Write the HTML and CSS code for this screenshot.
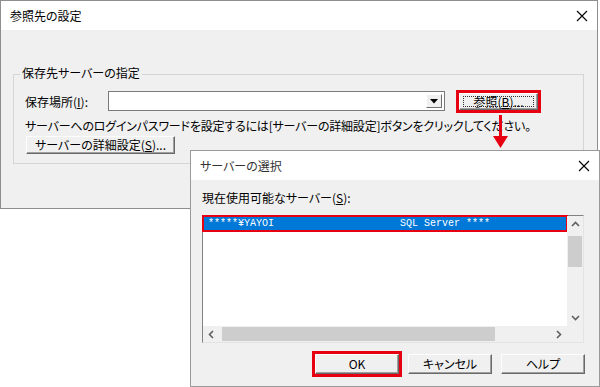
FILE: index.html
```html
<!DOCTYPE html>
<html lang="ja">

<head>
    <meta charset="UTF-8">
    <meta name="viewport" content="width=device-width, initial-scale=1.0">
    <title>参照先の設定</title>
    <link rel="stylesheet" href="styles.css">
</head>

<body>
    <div class="desktop">
        <div class="window main-window">
            <div class="titlebar">
                <span class="title">参照先の設定</span>
                <svg class="close" width="12" height="12" viewBox="0 0 12 12">
                    <path d="M1 1 L11 11 M11 1 L1 11" stroke="#000" stroke-width="1.1" fill="none" />
                </svg>
            </div>
            <div class="window-body">
                <fieldset class="group">
                    <legend>保存先サーバーの指定</legend>
                    <div class="row place-row">
                        <span class="label">保存場所(<u>I</u>):</span>
                        <div class="combo">
                            <div class="combo-btn">
                                <svg width="8" height="5" viewBox="0 0 8 5">
                                    <path d="M0 0 L8 0 L4 4.5 Z" fill="#000" />
                                </svg>
                            </div>
                        </div>
                        <button class="btn browse-btn marked"><span class="focus">参照(<u>B</u>)...</span></button>
                    </div>
                    <p class="hint">サーバーへのログインパスワードを設定するには[サーバーの詳細設定]ボタンをクリックしてください。</p>
                    <button class="btn detail-btn">サーバーの詳細設定(<u>S</u>)...</button>
                </fieldset>
            </div>
        </div>

        <svg class="pointer" width="17" height="34" viewBox="0 0 17 34">
            <path d="M8.5 0 L8.5 24" stroke="#e60012" stroke-width="3" fill="none" />
            <path d="M1 21 L16 21 L8.5 33 Z" fill="#e60012" />
        </svg>

        <div class="window server-window">
            <div class="titlebar">
                <span class="title sub-title">サーバーの選択</span>
                <svg class="close" width="12" height="12" viewBox="0 0 12 12">
                    <path d="M1 1 L11 11 M11 1 L1 11" stroke="#000" stroke-width="1.1" fill="none" />
                </svg>
            </div>
            <div class="window-body server-body">
                <p class="list-label">現在使用可能なサーバー(<u>S</u>):</p>
                <div class="listbox">
                    <div class="items">
                        <div class="item selected">*****¥YAYOI                     SQL Server ****</div>
                    </div>
                    <div class="vscroll">
                        <span class="arrow">
                            <svg width="9" height="6" viewBox="0 0 9 6"><path d="M1 5 L4.5 1.5 L8 5" stroke="#606060" stroke-width="1.6" fill="none" /></svg>
                        </span>
                        <div class="track"><div class="thumb vthumb"></div></div>
                        <span class="arrow">
                            <svg width="9" height="6" viewBox="0 0 9 6"><path d="M1 1 L4.5 4.5 L8 1" stroke="#606060" stroke-width="1.6" fill="none" /></svg>
                        </span>
                    </div>
                    <div class="hscroll">
                        <span class="arrow">
                            <svg width="6" height="9" viewBox="0 0 6 9"><path d="M5 1 L1.5 4.5 L5 8" stroke="#606060" stroke-width="1.6" fill="none" /></svg>
                        </span>
                        <div class="track"><div class="thumb hthumb"></div></div>
                        <span class="arrow">
                            <svg width="6" height="9" viewBox="0 0 6 9"><path d="M1 1 L4.5 4.5 L1 8" stroke="#606060" stroke-width="1.6" fill="none" /></svg>
                        </span>
                    </div>
                    <div class="corner"></div>
                </div>
                <div class="actions">
                    <button class="btn action-btn marked">OK</button>
                    <button class="btn action-btn">キャンセル</button>
                    <button class="btn action-btn">ヘルプ</button>
                </div>
            </div>
        </div>
    </div>
</body>

</html>
```

FILE: styles.css
```css
* {
    box-sizing: border-box;
}

body {
    margin: 0;
    background-color: #fff;
    font-family: "Noto Sans CJK JP", sans-serif;
    font-size: 12px;
    font-feature-settings: "palt";
    color: #000;
}

.desktop {
    position: relative;
    width: 600px;
    height: 387px;
    overflow: hidden;
}

.window {
    display: flex;
    flex-direction: column;
    background-color: #f0f0f0;
    border: 1px solid #8e8e8e;
}

.main-window {
    width: 598px;
    height: 209px;
}

.titlebar {
    flex: none;
    height: 29px;
    display: flex;
    align-items: center;
    justify-content: space-between;
    padding: 0 9px 0 9px;
    background-color: #fff;
}

.title {
    line-height: 16px;
}

.sub-title {
    color: #333;
}

.window-body {
    padding: 35px 13px 0 12px;
}

/* group box */
.group {
    margin: 0;
    padding: 0 12px 9px 11px;
    border: 1px solid #d5d5d5;
    border-radius: 0;
}

.group legend {
    margin-left: -5px;
    padding: 1px 2px 3px 2px;
    line-height: 14px;
}

.row {
    display: flex;
    align-items: center;
}

.place-row {
    margin-top: 8px;
}

.label {
    width: 83px;
}

.combo {
    width: 337px;
    height: 20px;
    display: flex;
    justify-content: flex-end;
    padding: 2px;
    background-color: #fff;
    border: 1px solid #7a7a7a;
}

.combo-btn {
    width: 16px;
    display: flex;
    align-items: center;
    justify-content: center;
    background-color: #f0f0f0;
    border: 1px solid;
    border-color: #fff #707070 #707070 #fff;
}

.btn {
    font-family: inherit;
    font-size: 12px;
    font-feature-settings: "palt";
    color: #000;
    padding: 0;
    line-height: 14px;
    background-color: #f0f0f0;
    border: 1px solid;
    border-color: #fdfdfd #696969 #696969 #fdfdfd;
    box-shadow: inset -1px -1px 0 #a0a0a0;
}

.marked {
    outline: 3px solid #e60012;
    outline-offset: 0;
}

.browse-btn {
    margin-left: 14px;
    width: 79px;
    height: 17px;
    padding: 2px 3px;
}

.focus {
    display: block;
    height: 100%;
    line-height: 10px;
    border: 1px dotted #333;
}

.hint {
    margin: 7px 0 0 0;
    line-height: 16px;
    letter-spacing: -0.2px;
    white-space: nowrap;
}

.detail-btn {
    margin: 2px 0 0 1px;
    width: 149px;
    height: 18px;
}

/* red pointer */
.pointer {
    position: absolute;
    left: 492px;
    top: 115px;
    z-index: 2;
}

/* server dialog */
.server-window {
    position: absolute;
    left: 190px;
    top: 150px;
    width: 410px;
    height: 237px;
    border-color: #9a9a9a;
}

.server-body {
    padding: 10px 14px 0 11px;
}

.list-label {
    margin: 0;
    line-height: 16px;
}

.listbox {
    margin-top: 9px;
    width: 382px;
    height: 128px;
    display: grid;
    grid-template-columns: 1fr 16px;
    grid-template-rows: 1fr 16px;
    background-color: #fff;
    border: 1px solid;
    border-color: #828282 #e3e3e3 #e3e3e3 #828282;
}

.items {
    min-width: 0;
}

.item {
    height: 15px;
    padding-left: 5px;
    font-family: "Liberation Mono", monospace;
    font-size: 10px;
    line-height: 15px;
    white-space: pre;
    font-feature-settings: normal;
}

.selected {
    background-color: #0078d7;
    color: #fff;
    outline: 2px solid #e60012;
    outline-offset: -1px;
}

.vscroll,
.hscroll {
    display: flex;
    background-color: #f0f0f0;
}

.vscroll {
    flex-direction: column;
}

.arrow {
    flex: none;
    width: 16px;
    height: 16px;
    display: flex;
    align-items: center;
    justify-content: center;
}

.track {
    flex: 1;
    position: relative;
}

.thumb {
    background-color: #cdcdcd;
}

.vthumb {
    margin: 4px 1px 0 1px;
    height: 31px;
}

.hthumb {
    margin: 1px 0 1px 3px;
    width: 273px;
    height: 14px;
}

.corner {
    background-color: #f0f0f0;
}

.actions {
    margin-top: 11px;
    display: flex;
    justify-content: flex-end;
    gap: 9px;
}

.action-btn {
    width: 84px;
    height: 20px;
}
```
